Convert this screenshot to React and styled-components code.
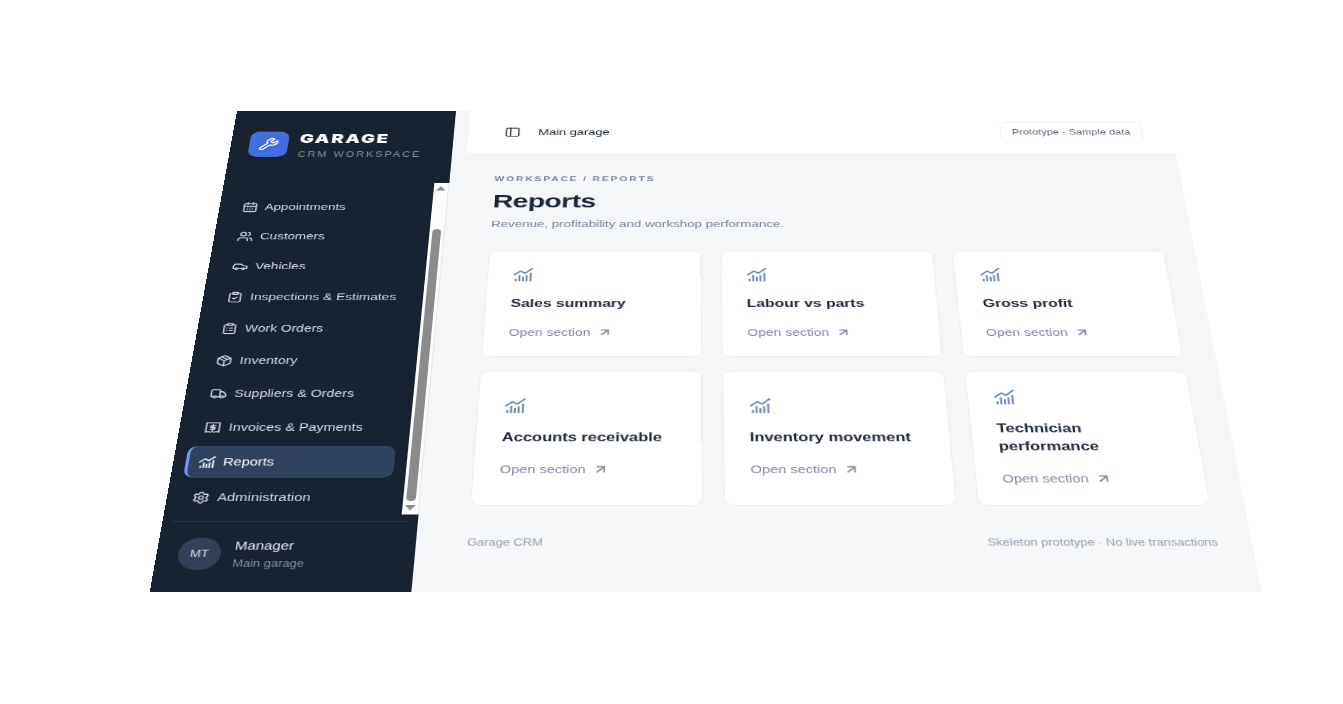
import React from "react";
import styled, { createGlobalStyle, css } from "styled-components";
import {
  ArrowUpRight,
  CalendarDays,
  Car,
  ClipboardCheck,
  ClipboardList,
  Package,
  PanelLeft,
  Settings,
  Truck,
  Users,
  Wrench,
} from "lucide-react";

const GlobalStyle = createGlobalStyle`
  *,
  *::before,
  *::after {
    box-sizing: border-box;
  }

  html,
  body {
    margin: 0;
    background: #ffffff;
    overflow: hidden;
  }

  body {
    font-family: "Liberation Sans", Arial, sans-serif;
    font-size: 14px;
    line-height: 20px;
    color: #1c2737;
  }

  a {
    color: inherit;
    text-decoration: none;
  }

  h1, h2, p, ul {
    margin: 0;
    padding: 0;
  }
`;

/* The whole workspace lies on a plane that leans away from the viewer. */
const Scene = styled.div`
  min-height: 100vh;
  display: flex;
  align-items: center;
  justify-content: center;
  perspective: 2715px;
  perspective-origin: 51% 51%;
`;

const Workspace = styled.div`
  width: 76.25vw;
  min-height: 690px;
  display: grid;
  grid-template-columns: 241px 1fr;
  column-gap: 16px;
  background: #f4f6f8;
  transform: translate3d(33px, -22px, -29px) rotateX(45deg);
`;

const Sidebar = styled.aside`
  display: flex;
  flex-direction: column;
  background: #182331;
  color: #d3dbe6;
`;

const Brand = styled.div`
  display: flex;
  align-items: center;
  gap: 12px;
  height: 120px;
  padding: 0 20px 8px;
`;

const BrandMark = styled.span`
  display: grid;
  place-items: center;
  width: 42px;
  height: 42px;
  border-radius: 10px;
  background: #416fe0;
  color: #ffffff;
`;

const BrandText = styled.div`
  padding-top: 6px;
`;

const BrandName = styled.div`
  font-family: Inter, "Liberation Sans", sans-serif;
  font-size: 20px;
  font-weight: 900;
  letter-spacing: 2px;
  line-height: 28px;
  color: #ffffff;
`;

const BrandTag = styled.div`
  font-size: 12px;
  letter-spacing: 2px;
  line-height: 24px;
  white-space: nowrap;
  color: #7e90aa;
`;

const NavScroller = styled.div`
  display: flex;
  height: 474px;
`;

const Nav = styled.nav`
  flex: 1;
  padding: 17px 12px 0;

  ul {
    display: flex;
    flex-direction: column;
    gap: 4px;
    list-style: none;
  }
`;

const NavLink = styled.a`
  display: flex;
  align-items: center;
  gap: 7px;
  height: 42px;
  padding: 0 9px;
  border-left: 3px solid transparent;
  border-radius: 10px;
  white-space: nowrap;

  ${(props) =>
    props.$active &&
    css`
      background: #2f435f;
      border-left-color: #6f9af5;
      color: #ffffff;
    `}
`;

const ScrollRail = styled.div`
  display: flex;
  flex-direction: column;
  align-items: center;
  width: 16px;
  background: #fcfcfc;
  border-right: 1px solid #e6e6ea;
`;

const ScrollArrow = styled.svg`
  width: 15px;
  height: 17px;
  fill: #8b8b8b;
`;

const ScrollThumb = styled.div`
  width: 9px;
  height: 384px;
  margin-top: auto;
  border-radius: 5px;
  background: #8b8b8b;
`;

const Profile = styled.div`
  display: flex;
  align-items: center;
  gap: 12px;
  margin: 8px 8px 0;
  padding: 18px 12px;
  border-top: 1px solid #2c394b;
`;

const Avatar = styled.span`
  display: grid;
  place-items: center;
  width: 40px;
  height: 40px;
  border-radius: 50%;
  background: #343f58;
  color: #d5dce8;
  font-size: 12px;
`;

const ProfileName = styled.div`
  line-height: 24px;
  color: #dfe5ee;
`;

const ProfilePlace = styled.div`
  font-size: 12px;
  line-height: 20px;
  color: #7e90aa;
`;

const Main = styled.div`
  display: flex;
  flex-direction: column;
  min-width: 0;
`;

const TopBar = styled.header`
  display: flex;
  align-items: center;
  gap: 12px;
  height: 71px;
  padding: 0 32px;
  background: #ffffff;
`;

const PanelButton = styled.button`
  display: grid;
  place-items: center;
  width: 32px;
  height: 32px;
  padding: 0;
  border: 0;
  background: none;
  color: #37414f;
`;

const Pill = styled.span`
  margin-left: auto;
  padding: 6px 12px;
  border: 1px solid #eceef2;
  border-radius: 8px;
  font-size: 12px;
  color: #5f6a7c;
`;

const Content = styled.main`
  padding: 32px 32px 0;
`;

const Crumb = styled.p`
  font-size: 11px;
  font-weight: 700;
  letter-spacing: 2px;
  color: #7a8496;
`;

const Title = styled.h1`
  margin: 8px 0;
  font-size: 30px;
  font-weight: 700;
  line-height: 36px;
  letter-spacing: -0.02em;
`;

const Lead = styled.p`
  color: #7a8395;
`;

const CardGrid = styled.div`
  display: grid;
  grid-template-columns: repeat(3, 1fr);
  gap: 20px;
  margin-top: 32px;
`;

const Card = styled.a`
  display: flex;
  flex-direction: column;
  justify-content: center;
  gap: 20px;
  padding: 24px 25px;
  border: 1px solid #eceef2;
  border-radius: 10px;
  background: #ffffff;

  > svg {
    color: #7089b4;
  }
`;

const CardTitle = styled.h2`
  font-size: 16px;
  font-weight: 700;
  line-height: 24px;
`;

const CardAction = styled.span`
  display: flex;
  align-items: center;
  gap: 6px;
  color: #8089a0;
`;

const Footer = styled.footer`
  display: flex;
  justify-content: space-between;
  margin-top: 36px;
  padding: 0 32px;
  font-size: 12px;
  color: #969eac;
`;

const ReportsIcon = ({ size }) => (
  <svg
    width={size}
    height={size}
    viewBox="0 0 24 24"
    fill="none"
    stroke="currentColor"
    strokeWidth="2.200"
    strokeLinecap="round"
    strokeLinejoin="round"
  >
    <path d="M2 12l7-6 5 3.500 8-7.500" />
    <path d="M4 19.500v2.500M8 13.500v8.500M12 16v6M16 13.500v8.500M20.500 9.500v12.500" />
  </svg>
);

const InvoiceIcon = ({ size }) => (
  <svg
    width={size}
    height={size}
    viewBox="0 0 24 24"
    fill="none"
    stroke="currentColor"
    strokeWidth="2"
    strokeLinecap="round"
    strokeLinejoin="round"
  >
    <path d="M3 3h18v18l-3-1.500-3 1.500-3-1.500-3 1.500-3-1.500L3 21z" />
    <path d="M15.500 8.500h-5a1.800 1.800 0 0 0 0 3.600h3a1.800 1.800 0 0 1 0 3.600h-5M12 6.500v11" />
  </svg>
);

const navItems = [
  { label: "Appointments", icon: CalendarDays },
  { label: "Customers", icon: Users },
  { label: "Vehicles", icon: Car },
  { label: "Inspections & Estimates", icon: ClipboardCheck },
  { label: "Work Orders", icon: ClipboardList },
  { label: "Inventory", icon: Package },
  { label: "Suppliers & Orders", icon: Truck },
  { label: "Invoices & Payments", icon: InvoiceIcon },
  { label: "Reports", icon: ReportsIcon, active: true },
  { label: "Administration", icon: Settings },
];

const reports = [
  "Sales summary",
  "Labour vs parts",
  "Gross profit",
  "Accounts receivable",
  "Inventory movement",
  "Technician performance",
];

const App = () => (
  <>
    <GlobalStyle />
    <Scene>
      <Workspace>
        <Sidebar>
          <Brand>
            <BrandMark>
              <Wrench size={22} />
            </BrandMark>
            <BrandText>
              <BrandName>GARAGE</BrandName>
              <BrandTag>CRM WORKSPACE</BrandTag>
            </BrandText>
          </Brand>
          <NavScroller>
            <Nav>
              <ul>
                {navItems.map(({ label, icon: Icon, active }) => (
                  <li key={label}>
                    <NavLink href="#" $active={active}>
                      <Icon size={17} />
                      {label}
                    </NavLink>
                  </li>
                ))}
              </ul>
            </Nav>
            <ScrollRail>
              <ScrollArrow viewBox="0 0 15 17">
                <path d="M7.500 5l5 7h-10z" />
              </ScrollArrow>
              <ScrollThumb />
              <ScrollArrow viewBox="0 0 15 17">
                <path d="M7.500 12l5-7h-10z" />
              </ScrollArrow>
            </ScrollRail>
          </NavScroller>
          <Profile>
            <Avatar>MT</Avatar>
            <div>
              <ProfileName>Manager</ProfileName>
              <ProfilePlace>Main garage</ProfilePlace>
            </div>
          </Profile>
        </Sidebar>
        <Main>
          <TopBar>
            <PanelButton type="button" aria-label="Toggle sidebar">
              <PanelLeft size={18} />
            </PanelButton>
            <span>Main garage</span>
            <Pill>Prototype · Sample data</Pill>
          </TopBar>
          <Content>
            <Crumb>WORKSPACE / REPORTS</Crumb>
            <Title>Reports</Title>
            <Lead>Revenue, profitability and workshop performance.</Lead>
            <CardGrid>
              {reports.map((name) => (
                <Card href="#" key={name}>
                  <ReportsIcon size={22} />
                  <CardTitle>{name}</CardTitle>
                  <CardAction>
                    Open section
                    <ArrowUpRight size={16} strokeWidth={2.5} />
                  </CardAction>
                </Card>
              ))}
            </CardGrid>
          </Content>
          <Footer>
            <span>Garage CRM</span>
            <span>Skeleton prototype · No live transactions</span>
          </Footer>
        </Main>
      </Workspace>
    </Scene>
  </>
);

export default App;
